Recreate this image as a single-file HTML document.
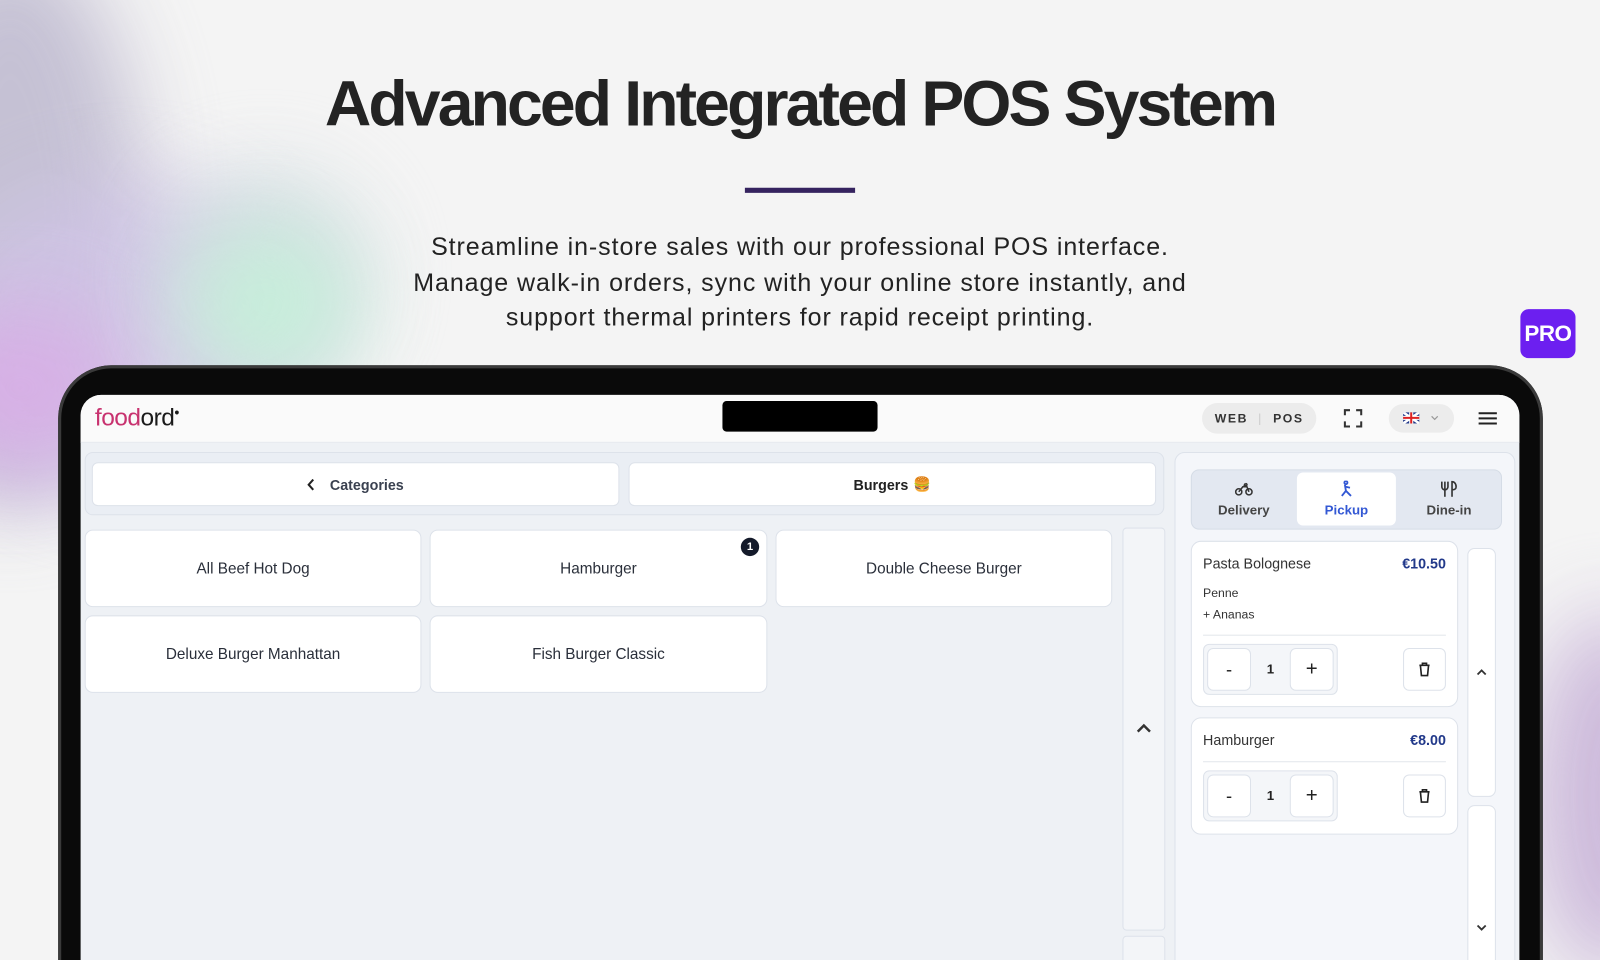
<!DOCTYPE html>
<html><head><meta charset="utf-8"><style>
html,body{margin:0;padding:0;width:1600px;height:960px;overflow:hidden;background:#f4f4f4}
#o{position:absolute;left:0;top:0;width:1600px;height:960px;overflow:hidden}
#w{position:absolute;left:0;top:0;width:1568px;height:941px;transform:scale(1.0204);transform-origin:0 0;font-family:"Liberation Sans",sans-serif;overflow:hidden}
.a{position:absolute}
.blob{position:absolute;filter:blur(40px);border-radius:50%}
h1{position:absolute;left:0;width:1568px;top:66px;margin:0;text-align:center;font-size:63px;font-weight:bold;letter-spacing:-2.8px;color:#232323}
.p{position:absolute;left:0;width:1568px;top:226px;text-align:center;font-size:24.5px;line-height:34.5px;color:#222;letter-spacing:.9px}
.card{position:absolute;background:#fff;border:1px solid #dde2ea;border-radius:8px;display:flex;align-items:center;justify-content:center;font-size:15px;color:#2a2f3a;box-sizing:border-box}
.btn{position:absolute;background:#fff;border:1px solid #dde2ea;border-radius:6px;box-sizing:border-box;display:flex;align-items:center;justify-content:center;color:#222}
.sm{font-size:13px;color:#333}
</style></head><body><div id="o"><div id="w">
<div class="blob" style="left:-120px;top:-60px;width:260px;height:560px;background:#b9b4cc;opacity:.8"></div>
<div class="blob" style="left:-60px;top:180px;width:360px;height:300px;background:#cfc3e6;opacity:.8"></div>
<div class="blob" style="left:-80px;top:300px;width:200px;height:160px;background:#d8aee6;opacity:.9"></div>
<div class="blob" style="left:160px;top:170px;width:200px;height:200px;background:#cfd9df;opacity:.8"></div>
<div class="blob" style="left:180px;top:220px;width:170px;height:160px;background:#c6f0da;opacity:.9"></div>
<div class="blob" style="left:1500px;top:600px;width:160px;height:360px;background:#c8b3d8;opacity:.9"></div>

<h1>Advanced Integrated POS System</h1>
<div class="a" style="left:730px;top:184px;width:108px;height:5px;background:#35235f"></div>
<div class="p">Streamline in-store sales with our professional POS interface.<br>Manage walk-in orders, sync with your online store instantly, and<br>support thermal printers for rapid receipt printing.</div>
<div class="a" style="left:1490px;top:303px;width:54px;height:48px;background:#6c1ff0;border-radius:8px;color:#fff;font-weight:bold;font-size:22px;display:flex;align-items:center;justify-content:center;letter-spacing:-.5px">PRO</div>

<div class="a" style="left:57px;top:358px;width:1455px;height:600px;background:#0a0a0a;border-radius:52px 52px 0 0;box-shadow:inset 0 0 0 3px #3a3a3a"></div>
<div class="a" style="left:79px;top:387px;width:1410px;height:554px;background:#eef1f5;border-radius:20px 20px 0 0;overflow:hidden">
  <div class="a" style="left:0;top:0;width:1410px;height:46px;background:#fafafa;border-bottom:1px solid #e6e9ee"></div>
  <div class="a" style="left:14px;top:9px;font-size:24px;letter-spacing:-.5px;"><span style="color:#c8326f">food</span><span style="color:#1a1a1a">ord</span><span style="color:#1a1a1a;font-size:14px;position:relative;top:-8px">•</span></div>
  <div class="a" style="left:629px;top:6px;width:152px;height:30px;background:#000;border-radius:4px"></div>
  <div class="a" style="left:1099px;top:8px;width:112px;height:30px;background:#ececec;border-radius:15px;font-size:12px;font-weight:bold;letter-spacing:1.5px;color:#333;display:flex;align-items:center;justify-content:center">WEB<span style="color:#ccc;margin:0 10px;font-weight:normal">|</span>POS</div>
  <svg class="a" style="left:1237px;top:13px" width="20" height="20" viewBox="0 0 20 20" fill="none" stroke="#333" stroke-width="2"><path d="M2 7V2h5M13 2h5v5M18 13v5h-5M7 18H2v-5"/></svg>
  <div class="a" style="left:1282px;top:9px;width:64px;height:28px;background:#ececec;border-radius:14px"></div>
  <svg class="a" style="left:1296px;top:17px" width="16" height="11" viewBox="0 0 16 11"><rect width="16" height="11" fill="#233a8a"/><path d="M0 0L16 11M16 0L0 11" stroke="#fff" stroke-width="2.5"/><path d="M8 0V11M0 5.5H16" stroke="#fff" stroke-width="4"/><path d="M8 0V11M0 5.5H16" stroke="#d22" stroke-width="2"/></svg>
  <svg class="a" style="left:1323px;top:20px" width="8" height="5" viewBox="0 0 8 5" fill="none" stroke="#999" stroke-width="1.2"><path d="M1 1l3 3 3-3"/></svg>
  <svg class="a" style="left:1370px;top:16px" width="18" height="14" viewBox="0 0 18 14" stroke="#222" stroke-width="2"><path d="M0 2h18M0 7h18M0 12h18"/></svg>

  <div class="a" style="left:4px;top:56px;width:1058px;height:62px;background:#eaeef4;border:1px solid #dde2ea;border-radius:8px;box-sizing:border-box"></div>
  <div class="btn" style="left:11px;top:66px;width:517px;height:43px;font-weight:bold;font-size:14px;color:#3a4150"><svg width="8" height="12" viewBox="0 0 8 12" fill="none" stroke="#222" stroke-width="2" style="margin-right:14px"><path d="M6 1L1.5 6 6 11"/></svg>Categories</div>
  <div class="btn" style="left:537px;top:66px;width:517px;height:43px;font-weight:bold;font-size:14px;color:#222">Burgers <span style="margin-left:5px">🍔</span></div>
  <div class="card" style="left:4px;top:132px;width:330px;height:76px">All Beef Hot Dog</div>
  <div class="card" style="left:342px;top:132px;width:331px;height:76px">Hamburger</div>
  <div class="a" style="left:647px;top:140px;width:18px;height:18px;border-radius:50%;background:#141a2a;color:#fff;font-size:11px;font-weight:bold;display:flex;align-items:center;justify-content:center">1</div>
  <div class="card" style="left:681px;top:132px;width:330px;height:76px">Double Cheese Burger</div>
  <div class="card" style="left:4px;top:216px;width:330px;height:76px">Deluxe Burger Manhattan</div>
  <div class="card" style="left:342px;top:216px;width:331px;height:76px">Fish Burger Classic</div>
  <div class="a" style="left:1021px;top:130px;width:42px;height:395px;background:#f3f5f8;border:1px solid #dde2ea;border-radius:4px;box-sizing:border-box"></div>
  <svg class="a" style="left:1034px;top:322px" width="16" height="10" viewBox="0 0 16 10" fill="none" stroke="#333" stroke-width="2.4"><path d="M2 8l6-6 6 6"/></svg>
  <div class="a" style="left:1021px;top:530px;width:42px;height:80px;background:#f3f5f8;border:1px solid #dde2ea;border-radius:4px;box-sizing:border-box"></div>

  <div class="a" style="left:1072px;top:56px;width:334px;height:560px;background:#f4f6fa;border:1px solid #dde2ea;border-radius:10px;box-sizing:border-box"></div>
  <div class="a" style="left:1088px;top:73px;width:305px;height:59px;background:#e3e8f1;border:1px solid #d5dce6;border-radius:8px;box-sizing:border-box"></div>
  <div class="a" style="left:1192px;top:76px;width:97px;height:52px;background:#fff;border-radius:6px"></div>
  <div class="a" style="left:1088px;top:84px;width:104px;text-align:center">
    <svg width="18" height="16" viewBox="0 0 18 16" fill="none" stroke="#333" stroke-width="1.5"><circle cx="4" cy="11" r="3"/><circle cx="14" cy="11" r="3"/><path d="M4 11l4-5h4l2 5M9 6l1-3M11 3a1 1 0 1 0 .1 0"/></svg>
    <div class="sm" style="font-weight:bold;color:#444">Delivery</div></div>
  <div class="a" style="left:1192px;top:84px;width:97px;text-align:center">
    <svg width="14" height="16" viewBox="0 0 14 16" fill="none" stroke="#3358d4" stroke-width="1.8"><circle cx="6" cy="2" r="1.5"/><path d="M5 4l1 6-4 5M6 10l5 5M6 6l4 1"/></svg>
    <div class="sm" style="font-weight:bold;color:#3358d4">Pickup</div></div>
  <div class="a" style="left:1289px;top:84px;width:104px;text-align:center">
    <svg width="18" height="16" viewBox="0 0 18 16" fill="none" stroke="#333" stroke-width="1.6"><path d="M2 1v5a3 3 0 0 0 6 0V1M5 1v15M12 16V1c3 0 4 3 4 5s-1 3-4 3"/></svg>
    <div class="sm" style="font-weight:bold;color:#444">Dine-in</div></div>

  <div class="a" style="left:1088px;top:143px;width:262px;height:163px;background:#fff;border:1px solid #dde2ea;border-radius:10px;box-sizing:border-box"></div>
  <div class="a sm" style="left:1100px;top:157px;font-size:14px;color:#333">Pasta Bolognese</div>
  <div class="a" style="left:1260px;top:157px;width:78px;text-align:right;font-size:14px;font-weight:bold;color:#22398a">€10.50</div>
  <div class="a" style="left:1100px;top:187px;font-size:12px;color:#333">Penne</div>
  <div class="a" style="left:1100px;top:208px;font-size:12px;color:#333">+ Ananas</div>
  <div class="a" style="left:1100px;top:235px;width:238px;height:1px;background:#e3e6eb"></div>
  <div class="a" style="left:1100px;top:244px;width:132px;height:50px;background:#f4f6f9;border:1px solid #dde2ea;border-radius:6px;box-sizing:border-box"></div>
  <div class="btn" style="left:1104px;top:248px;width:43px;height:42px;font-size:18px">-</div>
  <div class="a" style="left:1147px;top:261px;width:38px;text-align:center;font-size:13px;font-weight:bold;color:#222">1</div>
  <div class="btn" style="left:1185px;top:248px;width:43px;height:42px;font-size:20px">+</div>
  <div class="btn" style="left:1296px;top:248px;width:42px;height:42px"><svg width="12" height="14" viewBox="0 0 12 14" fill="none" stroke="#222" stroke-width="1.6"><path d="M1 3h10M4 3V1h4v2M2 3l1 10h6l1-10"/></svg></div>

  <div class="a" style="left:1088px;top:316px;width:262px;height:115px;background:#fff;border:1px solid #dde2ea;border-radius:10px;box-sizing:border-box"></div>
  <div class="a" style="left:1100px;top:330px;font-size:14px;color:#333">Hamburger</div>
  <div class="a" style="left:1260px;top:330px;width:78px;text-align:right;font-size:14px;font-weight:bold;color:#22398a">€8.00</div>
  <div class="a" style="left:1100px;top:359px;width:238px;height:1px;background:#e3e6eb"></div>
  <div class="a" style="left:1100px;top:368px;width:132px;height:50px;background:#f4f6f9;border:1px solid #dde2ea;border-radius:6px;box-sizing:border-box"></div>
  <div class="btn" style="left:1104px;top:372px;width:43px;height:42px;font-size:18px">-</div>
  <div class="a" style="left:1147px;top:385px;width:38px;text-align:center;font-size:13px;font-weight:bold;color:#222">1</div>
  <div class="btn" style="left:1185px;top:372px;width:43px;height:42px;font-size:20px">+</div>
  <div class="btn" style="left:1296px;top:372px;width:42px;height:42px"><svg width="12" height="14" viewBox="0 0 12 14" fill="none" stroke="#222" stroke-width="1.6"><path d="M1 3h10M4 3V1h4v2M2 3l1 10h6l1-10"/></svg></div>

  <div class="a" style="left:1359px;top:150px;width:28px;height:244px;background:#fff;border:1px solid #dde2ea;border-radius:7px;box-sizing:border-box"></div>
  <svg class="a" style="left:1367px;top:268px" width="12" height="8" viewBox="0 0 12 8" fill="none" stroke="#333" stroke-width="1.8"><path d="M2 6l4-4 4 4"/></svg>
  <div class="a" style="left:1359px;top:402px;width:28px;height:200px;background:#fff;border:1px solid #dde2ea;border-radius:7px;box-sizing:border-box"></div>
  <svg class="a" style="left:1367px;top:518px" width="12" height="8" viewBox="0 0 12 8" fill="none" stroke="#333" stroke-width="1.8"><path d="M2 2l4 4 4-4"/></svg>
</div>
</div></div></body></html>
